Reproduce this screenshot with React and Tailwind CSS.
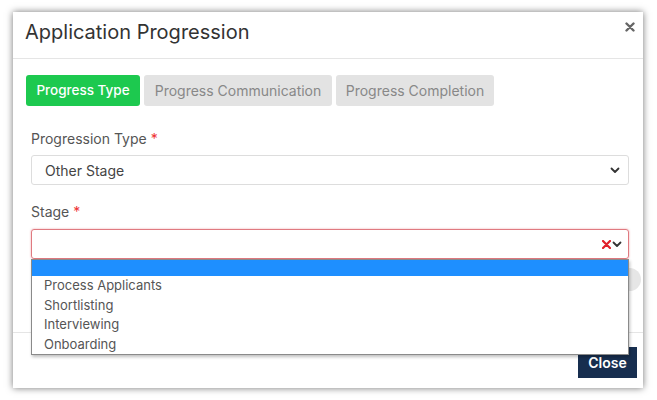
import React from "react";

const font = { fontFamily: "Inter, 'Open Sans', sans-serif" };

const Chevron = () => (
  <svg width="10" height="7" viewBox="0 0 10 7" fill="none">
    <path d="M1.5 1.5 L5 5 L8.5 1.5" stroke="#333" strokeWidth="1.8" strokeLinecap="round" strokeLinejoin="round" />
  </svg>
);

const App = () => {
  const tabs = [
    { label: "Progress Type", w: "w-[114px]" },
    { label: "Progress Communication", w: "w-[188px]" },
    { label: "Progress Completion", w: "w-[158px]" },
  ];
  const stages = ["Process Applicants", "Shortlisting", "Interviewing", "Onboarding"];

  return (
    <div className="h-[400px] w-[657px] bg-white pl-[13px] pt-[12px]" style={font}>
      <div className="relative flex h-[376px] w-[630px] flex-col bg-white shadow-[0_0_7px_rgba(0,0,0,0.55)]">
        {/* Header */}
        <div className="flex h-[47px] shrink-0 items-center justify-between border-b border-[#e5e5e5] pl-[12px] pr-[8px]">
          <h1 className="-mt-[6px] text-[20px] text-[#333]">Application Progression</h1>
          <svg className="-mt-[16px]" width="10" height="10" viewBox="0 0 10 10">
            <path d="M1.5 1.5 L8.5 8.5 M8.5 1.5 L1.5 8.5" stroke="#666" strokeWidth="2.4" strokeLinecap="round" />
          </svg>
        </div>

        {/* Body */}
        <div className="relative h-[274px] shrink-0 border-b border-[#e5e5e5] pl-[13px] pr-[13px] pt-[16px]">
          <div className="flex gap-[4px]">
            {tabs.map((t, i) => (
              <div
                key={t.label}
                className={
                  i === 0
                    ? `flex h-[31px] ${t.w} items-center justify-center rounded-[3px] bg-[#1dc94f] text-[13.5px] font-medium text-white`
                    : `flex h-[31px] ${t.w} items-center justify-center rounded-[3px] bg-[#e3e3e3] text-[14px] text-[#888]`
                }
              >
                {t.label}
              </div>
            ))}
          </div>

          <div className="pl-[5px] pr-[1px]">
            <div className="mt-[23px] h-[20px] text-[14px] leading-[20px] text-[#555]">
              Progression Type <span className="text-[#e33]">*</span>
            </div>
            <div className="mt-[6px] flex h-[30px] items-center justify-between rounded-[3px] border border-[#ddd] pl-[13px] pr-[8px] text-[14px] text-[#444]">
              <span>Other Stage</span>
              <Chevron />
            </div>

            <div className="mt-[17px] h-[20px] text-[14px] leading-[20px] text-[#555]">
              Stage <span className="text-[#e33]">*</span>
            </div>
            <div className="relative mt-[7px]">
              <div className="flex h-[30px] items-center justify-end gap-[1px] rounded-[3px] border border-[#e07a80] pr-[6px] shadow-[0_0_2px_rgba(220,53,69,0.5)]">
                <svg width="9" height="9" viewBox="0 0 9 9">
                  <path d="M1 1 L8 8 M8 1 L1 8" stroke="#e0202a" strokeWidth="2.2" strokeLinecap="round" />
                </svg>
                <Chevron />
              </div>

              {/* behind dropdown */}
              <div className="absolute right-[-12px] top-[39px] h-[23px] w-[80px] rounded-full bg-[#e6e6e6]" />

              {/* Dropdown list */}
              <div className="absolute left-0 top-[30px] z-10 w-full border border-[#8a8a8a] bg-white shadow-[1px_2px_3px_rgba(0,0,0,0.25)]">
                <div className="h-[16px] bg-[#1e8fff]" />
                {stages.map((s) => (
                  <div key={s} className="h-[19.5px] pl-[12px] text-[13px] leading-[19.5px] text-[#555]">
                    {s}
                  </div>
                ))}
              </div>
            </div>
          </div>
        </div>

        {/* Footer */}
        <div className="flex flex-1 items-start justify-end pr-[6px] pt-[14px]">
          <button className="flex h-[31px] w-[59px] items-center justify-center bg-[#172e4f] text-[14px] font-semibold text-white">
            Close
          </button>
        </div>
      </div>
    </div>
  );
};

export default App;
